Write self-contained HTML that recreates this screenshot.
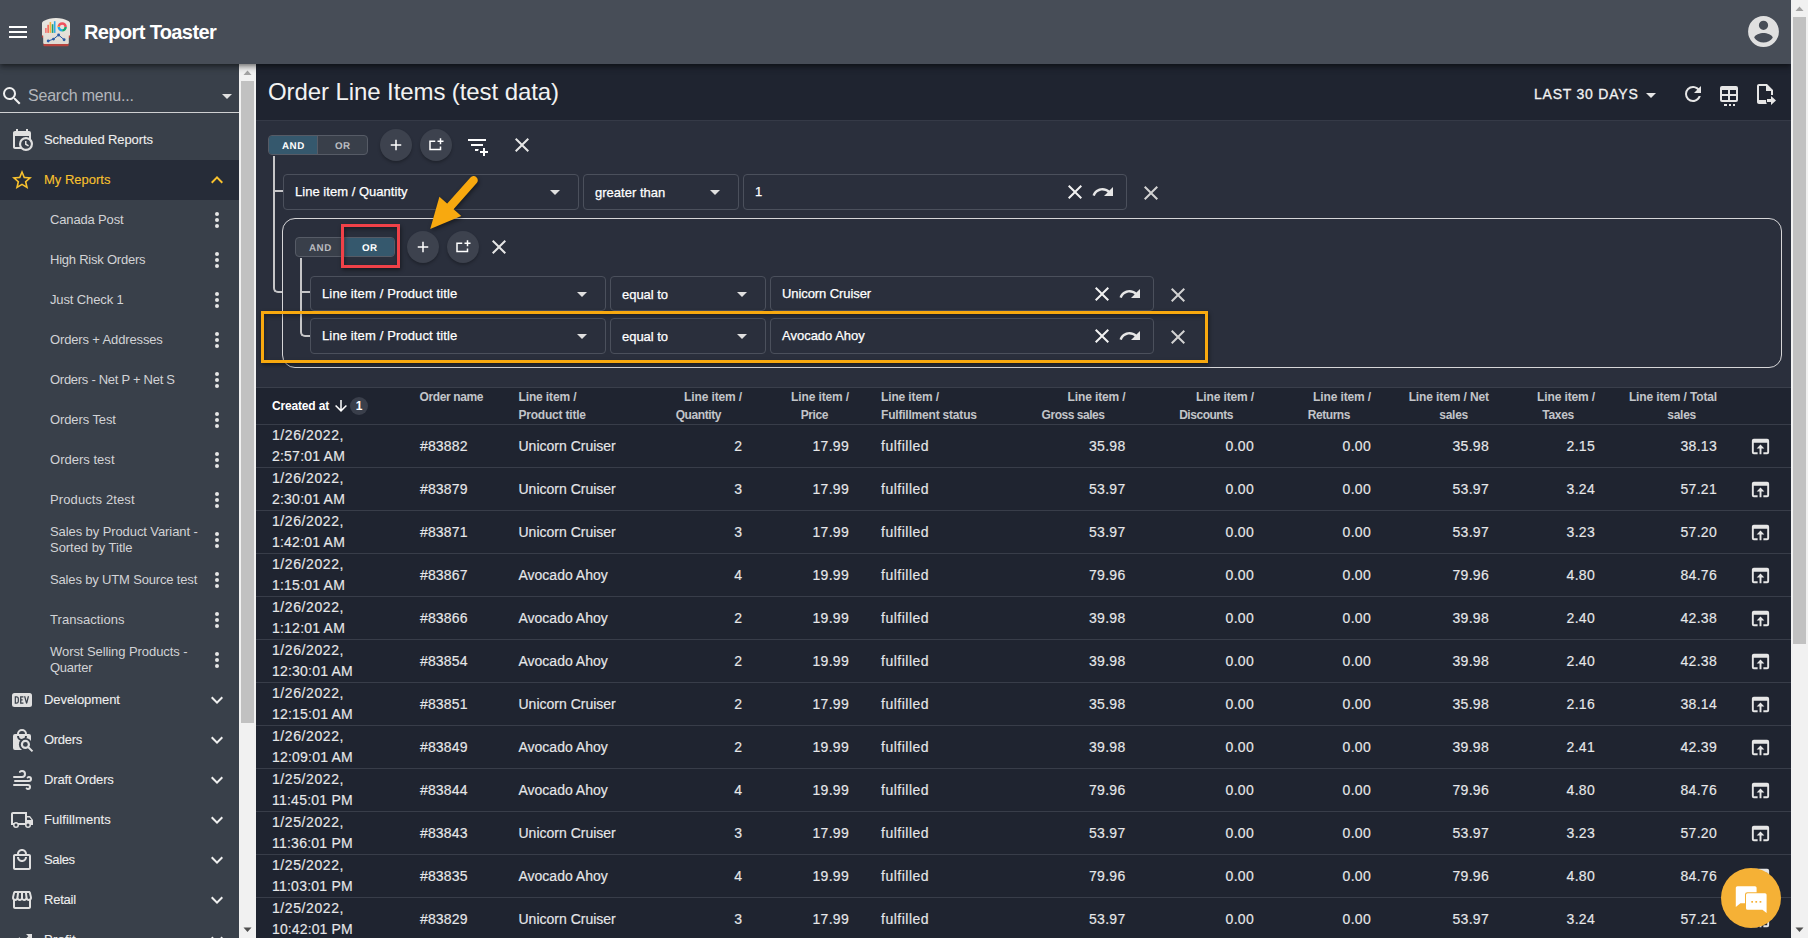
<!DOCTYPE html>
<html><head><meta charset="utf-8"><title>Report Toaster</title>
<style>
*{box-sizing:border-box}
html,body{margin:0;padding:0}
body{width:1808px;height:938px;overflow:hidden;position:relative;background:#1f2430;
 font-family:"Liberation Sans",sans-serif;color:#e6e6e6;font-size:14px}
.abs,.ic,.t{position:absolute}
.ic{display:block;overflow:visible}
.t{white-space:nowrap;line-height:20px}
#topbar{position:absolute;left:0;top:0;width:1791px;height:64px;background:#474d57;
 box-shadow:0 2px 4px -1px rgba(0,0,0,.35),0 4px 5px 0 rgba(0,0,0,.2),0 1px 10px 0 rgba(0,0,0,.15);z-index:5}
#side{position:absolute;left:0;top:64px;width:239px;height:874px;background:#39404a;overflow:hidden}
#sidesb{position:absolute;left:239px;top:64px;width:17px;height:874px;background:#f1f1f1}
#pagesb{position:absolute;left:1791px;top:0;width:17px;height:938px;background:#f1f1f1;z-index:6}
.thumb{position:absolute;background:#c1c1c1}
.m13{font-size:13px;-webkit-text-stroke:.1px currentColor}
.sub{font-size:13px;color:#d2d3d6}
#titlebar{position:absolute;left:256px;top:64px;width:1535px;height:56px;background:#1f2430}
#filters{position:absolute;left:256px;top:120px;width:1535px;height:268px;background:#2a2f3c;
 border-top:1px solid #353a47;border-bottom:1px solid #3a3f4b}
.box{position:absolute;height:35px;border:1px solid #4b505c;border-radius:4px}
.box .t{top:7px;font-size:13px;color:#fff;-webkit-text-stroke:.25px #fff}
.tog{position:absolute;width:100px;height:20px;border-radius:4px;background:#393f4a;border:1px solid #565b66;overflow:hidden}
.tog span{position:absolute;top:0;height:18px;line-height:20.4px;text-align:center;font-size:9.8px;font-weight:bold;letter-spacing:.5px;color:#b9bbc0}
.tog span.on{background:#35586d;color:#fff}
.tog i{display:inline-block;font-style:normal;transform:rotate(.03deg)}
.fab{position:absolute;width:32px;height:32px;border-radius:50%;background:#3d424e;
 box-shadow:0 2px 3px rgba(0,0,0,.25)}
.line{position:absolute;background:#c6c6c8}
#tbl{position:absolute;left:256px;top:388px;width:1535px;height:550px;background:#1f2430;overflow:hidden}
.row{position:absolute;left:0;width:1535px;height:43px;border-bottom:1px solid #383d49}
.row .t{font-size:14px;color:#e6e7e9;-webkit-text-stroke:.15px #e6e7e9}
.th{position:absolute;font-size:12px;font-weight:bold;color:#c3c5c9;line-height:18px;white-space:nowrap}
.r{text-align:right}
</style></head><body>

<div id="topbar">
<svg class="ic" style="left:6px;top:20px;width:24px;height:24px;" viewBox="0 0 24 24"><path fill="#fff" d="M3,6H21V8H3V6M3,11H21V13H3V11M3,16H21V18H3V16Z"/></svg>
<svg class="ic" style="left:40px;top:16px;width:32px;height:32px" viewBox="0 0 32 32">
<defs><linearGradient id="lg" x1="0" y1="0" x2="0" y2="1"><stop offset="0" stop-color="#ebe8e2"/><stop offset="1" stop-color="#dfdbd3"/></linearGradient></defs>
<path d="M3.4,27.6 H28.6 V29.2 Q28.6,30.2 27.4,30.2 H4.6 Q3.4,30.2 3.4,29.2Z" fill="#b8443e"/>
<rect x="1.8" y="19" width="28.4" height="2.8" rx="1" fill="#b8443e"/>
<path d="M2,7.2 Q2,5.6 3.6,4.9 Q9,1.9 16,1.9 Q23,1.9 28.4,4.9 Q30,5.6 30,7.2 V19.6 H28.8 V27 Q28.8,28 27.6,28 H4.4 Q3.2,28 3.2,27 V19.6 H2Z" fill="url(#lg)"/>
<rect x="5" y="12" width="1.7" height="4.9" fill="#f07a7a"/>
<rect x="7.3" y="8.8" width="1.7" height="8.1" fill="#f4705e"/>
<rect x="9.6" y="6" width="1.6" height="10.9" fill="#f8b23e"/>
<rect x="11.8" y="8.2" width="1.6" height="8.7" fill="#22a06c"/>
<rect x="13.9" y="5.2" width="1.6" height="11.7" fill="#2fa8ea"/>
<g fill="none" stroke-width="2.4">
<path d="M18.75,10.9 A3.45,3.45 0 0 1 25.65,10.9" stroke="#f0525e"/>
<path d="M25.65,10.9 A3.45,3.45 0 0 1 22.2,14.35" stroke="#12a870"/>
<path d="M22.2,14.35 A3.45,3.45 0 0 1 18.75,10.9" stroke="#22a8ea"/>
<path d="M18.75,10.9 A3.45,3.45 0 0 1 18.85,10.1" stroke="#f8b23e"/>
</g>
<path d="M8.2,25 L13.5,23.1 L18.6,19 L24.1,23.7" fill="none" stroke="#2a5aa4" stroke-width="1"/>
<g fill="#2a5aa4"><circle cx="8.2" cy="25" r="1.45"/><circle cx="13.5" cy="23.1" r="1.45"/><circle cx="18.6" cy="19" r="1.45"/><circle cx="24.1" cy="23.7" r="1.45"/></g>
</svg>
<div class="t" style="left:84px;top:20px;line-height:24px;font-size:20px;font-weight:bold;color:#fff;letter-spacing:-.62px">Report Toaster</div>
<svg class="ic" style="left:1744.5px;top:13.1px;width:37px;height:37px;" viewBox="0 0 24 24"><path fill="#e0e0e0" d="M12,19.2C9.5,19.2 7.29,17.92 6,16C6.03,14 10,12.9 12,12.9C14,12.9 17.97,14 18,16C16.71,17.92 14.5,19.2 12,19.2M12,5A3,3 0 0,1 15,8A3,3 0 0,1 12,11A3,3 0 0,1 9,8A3,3 0 0,1 12,5M12,2A10,10 0 0,0 2,12A10,10 0 0,0 12,22A10,10 0 0,0 22,12C22,6.47 17.5,2 12,2Z"/></svg>
</div>
<div id="side">
<svg class="ic" style="left:0px;top:20px;width:24px;height:24px;" viewBox="0 0 24 24"><path fill="#f0f0f0" d="M9.5,3A6.5,6.5 0 0,1 16,9.5C16,11.11 15.41,12.59 14.44,13.73L14.71,14H15.5L20.5,19L19,20.5L14,15.5V14.71L13.73,14.44C12.59,15.41 11.11,16 9.5,16A6.5,6.5 0 0,1 3,9.5A6.5,6.5 0 0,1 9.5,3M9.5,5C7,5 5,7 5,9.5C5,12 7,14 9.5,14C12,14 14,12 14,9.5C14,7 12,5 9.5,5Z"/></svg>
<div class="t" style="left:28px;top:21px;line-height:22px;font-size:16px;color:#b3b6bb;letter-spacing:-.2px">Search menu...</div>
<svg class="ic" style="left:215px;top:20px;width:24px;height:24px;" viewBox="0 0 24 24"><path fill="#e0e0e0" d="M7,10L12,15L17,10H7Z"/></svg>
<div class="abs" style="left:0;top:48px;width:239px;height:1px;background:#cfd0d2"></div>
<svg class="ic" style="left:10px;top:64px;width:24px;height:24px;" viewBox="0 0 24 24"><path fill="#e0e0e0" d="M15,13H16.5V15.82L18.94,17.23L18.19,18.53L15,16.69V13M19,8H5V19H9.67C9.24,18.09 9,17.07 9,16A7,7 0 0,1 16,9C17.07,9 18.09,9.24 19,9.67V8M5,21C3.89,21 3,20.1 3,19V5C3,3.89 3.89,3 5,3H6V1H8V3H16V1H18V3H19A2,2 0 0,1 21,5V11.1C22.24,12.36 23,14.09 23,16A7,7 0 0,1 16,23C14.09,23 12.36,22.24 11.1,21H5M16,11.15A4.85,4.85 0 0,0 11.15,16C11.15,18.68 13.32,20.85 16,20.85A4.85,4.85 0 0,0 20.85,16C20.85,13.32 18.68,11.15 16,11.15Z"/></svg>
<div class="t m13" style="left:44px;top:65.5px;color:#eee;letter-spacing:-0.10px">Scheduled Reports</div>
<div class="abs" style="left:0;top:96px;width:239px;height:40px;background:#262c38"></div>
<svg class="ic" style="left:10px;top:104px;width:24px;height:24px;" viewBox="0 0 24 24"><path fill="#f9c22e" d="M12,15.39L8.24,17.66L9.23,13.38L5.91,10.5L10.29,10.13L12,6.09L13.71,10.13L18.09,10.5L14.77,13.38L15.76,17.66M22,9.24L14.81,8.63L12,2L9.19,8.63L2,9.24L7.45,13.97L5.82,21L12,17.27L18.18,21L16.54,13.97L22,9.24Z"/></svg>
<div class="t m13" style="left:44px;top:105.5px;color:#f9c22e">My Reports</div>
<svg class="ic" style="left:205px;top:104px;width:24px;height:24px;" viewBox="0 0 24 24"><path fill="#f9c22e" d="M7.41,15.41L12,10.83L16.59,15.41L18,14L12,8L6,14L7.41,15.41Z"/></svg>
<div class="t sub" style="left:50px;top:145.5px"><span style="letter-spacing:-0.15px">Canada Post</span></div>
<svg class="ic" style="left:205px;top:144px;width:24px;height:24px;" viewBox="0 0 24 24"><path fill="#e6e6e6" d="M12,16A2,2 0 0,1 14,18A2,2 0 0,1 12,20A2,2 0 0,1 10,18A2,2 0 0,1 12,16M12,10A2,2 0 0,1 14,12A2,2 0 0,1 12,14A2,2 0 0,1 10,12A2,2 0 0,1 12,10M12,4A2,2 0 0,1 14,6A2,2 0 0,1 12,8A2,2 0 0,1 10,6A2,2 0 0,1 12,4Z"/></svg>
<div class="t sub" style="left:50px;top:185.5px"><span style="letter-spacing:-0.23px">High Risk Orders</span></div>
<svg class="ic" style="left:205px;top:184px;width:24px;height:24px;" viewBox="0 0 24 24"><path fill="#e6e6e6" d="M12,16A2,2 0 0,1 14,18A2,2 0 0,1 12,20A2,2 0 0,1 10,18A2,2 0 0,1 12,16M12,10A2,2 0 0,1 14,12A2,2 0 0,1 12,14A2,2 0 0,1 10,12A2,2 0 0,1 12,10M12,4A2,2 0 0,1 14,6A2,2 0 0,1 12,8A2,2 0 0,1 10,6A2,2 0 0,1 12,4Z"/></svg>
<div class="t sub" style="left:50px;top:225.5px"><span style="letter-spacing:-0.13px">Just Check 1</span></div>
<svg class="ic" style="left:205px;top:224px;width:24px;height:24px;" viewBox="0 0 24 24"><path fill="#e6e6e6" d="M12,16A2,2 0 0,1 14,18A2,2 0 0,1 12,20A2,2 0 0,1 10,18A2,2 0 0,1 12,16M12,10A2,2 0 0,1 14,12A2,2 0 0,1 12,14A2,2 0 0,1 10,12A2,2 0 0,1 12,10M12,4A2,2 0 0,1 14,6A2,2 0 0,1 12,8A2,2 0 0,1 10,6A2,2 0 0,1 12,4Z"/></svg>
<div class="t sub" style="left:50px;top:265.5px"><span style="letter-spacing:-0.14px">Orders + Addresses</span></div>
<svg class="ic" style="left:205px;top:264px;width:24px;height:24px;" viewBox="0 0 24 24"><path fill="#e6e6e6" d="M12,16A2,2 0 0,1 14,18A2,2 0 0,1 12,20A2,2 0 0,1 10,18A2,2 0 0,1 12,16M12,10A2,2 0 0,1 14,12A2,2 0 0,1 12,14A2,2 0 0,1 10,12A2,2 0 0,1 12,10M12,4A2,2 0 0,1 14,6A2,2 0 0,1 12,8A2,2 0 0,1 10,6A2,2 0 0,1 12,4Z"/></svg>
<div class="t sub" style="left:50px;top:305.5px"><span style="letter-spacing:-0.28px">Orders - Net P + Net S</span></div>
<svg class="ic" style="left:205px;top:304px;width:24px;height:24px;" viewBox="0 0 24 24"><path fill="#e6e6e6" d="M12,16A2,2 0 0,1 14,18A2,2 0 0,1 12,20A2,2 0 0,1 10,18A2,2 0 0,1 12,16M12,10A2,2 0 0,1 14,12A2,2 0 0,1 12,14A2,2 0 0,1 10,12A2,2 0 0,1 12,10M12,4A2,2 0 0,1 14,6A2,2 0 0,1 12,8A2,2 0 0,1 10,6A2,2 0 0,1 12,4Z"/></svg>
<div class="t sub" style="left:50px;top:345.5px"><span style="letter-spacing:-0.10px">Orders Test</span></div>
<svg class="ic" style="left:205px;top:344px;width:24px;height:24px;" viewBox="0 0 24 24"><path fill="#e6e6e6" d="M12,16A2,2 0 0,1 14,18A2,2 0 0,1 12,20A2,2 0 0,1 10,18A2,2 0 0,1 12,16M12,10A2,2 0 0,1 14,12A2,2 0 0,1 12,14A2,2 0 0,1 10,12A2,2 0 0,1 12,10M12,4A2,2 0 0,1 14,6A2,2 0 0,1 12,8A2,2 0 0,1 10,6A2,2 0 0,1 12,4Z"/></svg>
<div class="t sub" style="left:50px;top:385.5px"><span style="letter-spacing:0.02px">Orders test</span></div>
<svg class="ic" style="left:205px;top:384px;width:24px;height:24px;" viewBox="0 0 24 24"><path fill="#e6e6e6" d="M12,16A2,2 0 0,1 14,18A2,2 0 0,1 12,20A2,2 0 0,1 10,18A2,2 0 0,1 12,16M12,10A2,2 0 0,1 14,12A2,2 0 0,1 12,14A2,2 0 0,1 10,12A2,2 0 0,1 12,10M12,4A2,2 0 0,1 14,6A2,2 0 0,1 12,8A2,2 0 0,1 10,6A2,2 0 0,1 12,4Z"/></svg>
<div class="t sub" style="left:50px;top:425.5px"><span style="letter-spacing:0.11px">Products 2test</span></div>
<svg class="ic" style="left:205px;top:424px;width:24px;height:24px;" viewBox="0 0 24 24"><path fill="#e6e6e6" d="M12,16A2,2 0 0,1 14,18A2,2 0 0,1 12,20A2,2 0 0,1 10,18A2,2 0 0,1 12,16M12,10A2,2 0 0,1 14,12A2,2 0 0,1 12,14A2,2 0 0,1 10,12A2,2 0 0,1 12,10M12,4A2,2 0 0,1 14,6A2,2 0 0,1 12,8A2,2 0 0,1 10,6A2,2 0 0,1 12,4Z"/></svg>
<div class="t sub" style="left:50px;top:460px;line-height:16px"><span style="letter-spacing:-0.09px">Sales by Product Variant -</span><br><span style="letter-spacing:-0.04px">Sorted by Title</span></div>
<svg class="ic" style="left:205px;top:464px;width:24px;height:24px;" viewBox="0 0 24 24"><path fill="#e6e6e6" d="M12,16A2,2 0 0,1 14,18A2,2 0 0,1 12,20A2,2 0 0,1 10,18A2,2 0 0,1 12,16M12,10A2,2 0 0,1 14,12A2,2 0 0,1 12,14A2,2 0 0,1 10,12A2,2 0 0,1 12,10M12,4A2,2 0 0,1 14,6A2,2 0 0,1 12,8A2,2 0 0,1 10,6A2,2 0 0,1 12,4Z"/></svg>
<div class="t sub" style="left:50px;top:505.5px"><span style="letter-spacing:-0.16px">Sales by UTM Source test</span></div>
<svg class="ic" style="left:205px;top:504px;width:24px;height:24px;" viewBox="0 0 24 24"><path fill="#e6e6e6" d="M12,16A2,2 0 0,1 14,18A2,2 0 0,1 12,20A2,2 0 0,1 10,18A2,2 0 0,1 12,16M12,10A2,2 0 0,1 14,12A2,2 0 0,1 12,14A2,2 0 0,1 10,12A2,2 0 0,1 12,10M12,4A2,2 0 0,1 14,6A2,2 0 0,1 12,8A2,2 0 0,1 10,6A2,2 0 0,1 12,4Z"/></svg>
<div class="t sub" style="left:50px;top:545.5px"><span style="letter-spacing:0.05px">Transactions</span></div>
<svg class="ic" style="left:205px;top:544px;width:24px;height:24px;" viewBox="0 0 24 24"><path fill="#e6e6e6" d="M12,16A2,2 0 0,1 14,18A2,2 0 0,1 12,20A2,2 0 0,1 10,18A2,2 0 0,1 12,16M12,10A2,2 0 0,1 14,12A2,2 0 0,1 12,14A2,2 0 0,1 10,12A2,2 0 0,1 12,10M12,4A2,2 0 0,1 14,6A2,2 0 0,1 12,8A2,2 0 0,1 10,6A2,2 0 0,1 12,4Z"/></svg>
<div class="t sub" style="left:50px;top:580px;line-height:16px"><span style="letter-spacing:-0.07px">Worst Selling Products -</span><br><span style="letter-spacing:-0.26px">Quarter</span></div>
<svg class="ic" style="left:205px;top:584px;width:24px;height:24px;" viewBox="0 0 24 24"><path fill="#e6e6e6" d="M12,16A2,2 0 0,1 14,18A2,2 0 0,1 12,20A2,2 0 0,1 10,18A2,2 0 0,1 12,16M12,10A2,2 0 0,1 14,12A2,2 0 0,1 12,14A2,2 0 0,1 10,12A2,2 0 0,1 12,10M12,4A2,2 0 0,1 14,6A2,2 0 0,1 12,8A2,2 0 0,1 10,6A2,2 0 0,1 12,4Z"/></svg>
<div class="t m13" style="left:44px;top:625.5px;color:#eee;letter-spacing:-0.07px">Development</div>
<svg class="ic" style="left:205px;top:624px;width:24px;height:24px;" viewBox="0 0 24 24"><path fill="#f0f0f0" d="M7.41,8.58L12,13.17L16.59,8.58L18,10L12,16L6,10L7.41,8.58Z"/></svg>
<div class="t m13" style="left:44px;top:665.5px;color:#eee;letter-spacing:-0.31px">Orders</div>
<svg class="ic" style="left:205px;top:664px;width:24px;height:24px;" viewBox="0 0 24 24"><path fill="#f0f0f0" d="M7.41,8.58L12,13.17L16.59,8.58L18,10L12,16L6,10L7.41,8.58Z"/></svg>
<svg class="ic" style="left:10px;top:704px;width:24px;height:24px;" viewBox="0 0 24 24"><path fill="#e0e0e0" d="M4,10A1,1 0 0,1 3,9A1,1 0 0,1 4,8H12A2,2 0 0,0 14,6A2,2 0 0,0 12,4C11.45,4 10.95,4.22 10.59,4.59C10.2,5 9.56,5 9.17,4.59C8.78,4.2 8.78,3.56 9.17,3.17C9.9,2.45 10.9,2 12,2A4,4 0 0,1 16,6A4,4 0 0,1 12,10H4M19,12A1,1 0 0,0 20,11A1,1 0 0,0 19,10C18.72,10 18.47,10.11 18.29,10.29C17.9,10.68 17.27,10.68 16.88,10.29C16.5,9.9 16.5,9.27 16.88,8.88C17.42,8.34 18.17,8 19,8A3,3 0 0,1 22,11A3,3 0 0,1 19,14H5A1,1 0 0,1 4,13A1,1 0 0,1 5,12H19M18,18H4A1,1 0 0,1 3,17A1,1 0 0,1 4,16H18A3,3 0 0,1 21,19A3,3 0 0,1 18,22C17.17,22 16.42,21.66 15.88,21.12C15.5,20.73 15.5,20.1 15.88,19.71C16.27,19.32 16.9,19.32 17.29,19.71C17.47,19.89 17.72,20 18,20A1,1 0 0,0 19,19A1,1 0 0,0 18,18Z"/></svg>
<div class="t m13" style="left:44px;top:705.5px;color:#eee;letter-spacing:-0.15px">Draft Orders</div>
<svg class="ic" style="left:205px;top:704px;width:24px;height:24px;" viewBox="0 0 24 24"><path fill="#f0f0f0" d="M7.41,8.58L12,13.17L16.59,8.58L18,10L12,16L6,10L7.41,8.58Z"/></svg>
<svg class="ic" style="left:10px;top:744px;width:24px;height:24px;" viewBox="0 0 24 24"><path fill="#e0e0e0" d="M18,18.5A1.5,1.5 0 0,0 19.5,17A1.5,1.5 0 0,0 18,15.5A1.5,1.5 0 0,0 16.5,17A1.5,1.5 0 0,0 18,18.5M19.5,9.5H17V12H21.46L19.5,9.5M6,18.5A1.5,1.5 0 0,0 7.5,17A1.5,1.5 0 0,0 6,15.5A1.5,1.5 0 0,0 4.5,17A1.5,1.5 0 0,0 6,18.5M20,8L23,12V17H21A3,3 0 0,1 18,20A3,3 0 0,1 15,17H9A3,3 0 0,1 6,20A3,3 0 0,1 3,17H1V6C1,4.89 1.89,4 3,4H17V8H20M3,6V15H3.76C4.31,14.39 5.11,14 6,14C6.89,14 7.69,14.39 8.24,15H15V6H3Z"/></svg>
<div class="t m13" style="left:44px;top:745.5px;color:#eee;letter-spacing:0.10px">Fulfillments</div>
<svg class="ic" style="left:205px;top:744px;width:24px;height:24px;" viewBox="0 0 24 24"><path fill="#f0f0f0" d="M7.41,8.58L12,13.17L16.59,8.58L18,10L12,16L6,10L7.41,8.58Z"/></svg>
<svg class="ic" style="left:10px;top:784px;width:24px;height:24px;" viewBox="0 0 24 24"><path fill="#e0e0e0" d="M19 6H17C17 3.2 14.8 1 12 1S7 3.2 7 6H5C3.9 6 3 6.9 3 8V20C3 21.1 3.9 22 5 22H19C20.1 22 21 21.1 21 20V8C21 6.9 20.1 6 19 6M12 3C13.7 3 15 4.3 15 6H9C9 4.3 10.3 3 12 3M19 20H5V8H19V20M12 12C10.3 12 9 10.7 9 9H7C7 11.8 9.2 14 12 14S17 11.8 17 9H15C15 10.7 13.7 12 12 12Z"/></svg>
<div class="t m13" style="left:44px;top:785.5px;color:#eee;letter-spacing:-0.36px">Sales</div>
<svg class="ic" style="left:205px;top:784px;width:24px;height:24px;" viewBox="0 0 24 24"><path fill="#f0f0f0" d="M7.41,8.58L12,13.17L16.59,8.58L18,10L12,16L6,10L7.41,8.58Z"/></svg>
<svg class="ic" style="left:10px;top:824px;width:24px;height:24px;" viewBox="0 0 24 24"><path fill="#e0e0e0" d="M21.9 8.89L20.85 4.52C20.63 3.62 19.85 3 18.94 3H5.05C4.15 3 3.36 3.63 3.15 4.52L2.1 8.89C1.86 9.91 2.08 10.95 2.72 11.77C2.8 11.88 2.91 11.96 3 12.06V19C3 20.1 3.9 21 5 21H19C20.1 21 21 20.1 21 19V12.06C21.09 11.97 21.2 11.88 21.28 11.78C21.92 10.96 22.15 9.91 21.9 8.89M18.91 4.99L19.96 9.36C20.06 9.78 19.97 10.2 19.71 10.53C19.57 10.71 19.27 11 18.77 11C18.16 11 17.63 10.51 17.56 9.86L16.98 5L18.91 4.99M13 5H14.96L15.5 9.52C15.55 9.91 15.43 10.3 15.17 10.59C14.95 10.85 14.63 11 14.22 11C13.55 11 13 10.41 13 9.69V5M8.49 9.52L9.04 5H11V9.69C11 10.41 10.45 11 9.71 11C9.37 11 9.06 10.85 8.82 10.59C8.57 10.3 8.45 9.91 8.49 9.52M4.04 9.36L5.05 5H7.02L6.44 9.86C6.36 10.51 5.84 11 5.23 11C4.74 11 4.43 10.71 4.3 10.53C4.03 10.21 3.94 9.78 4.04 9.36M5 19V12.97C5.08 12.98 5.15 13 5.23 13C6.1 13 6.89 12.64 7.47 12.05C8.07 12.65 8.87 13 9.78 13C10.65 13 11.43 12.64 12 12.07C12.59 12.64 13.39 13 14.29 13C15.13 13 15.93 12.65 16.53 12.05C17.11 12.64 17.9 13 18.77 13C18.85 13 18.92 12.98 19 12.97V19H5Z"/></svg>
<div class="t m13" style="left:44px;top:825.5px;color:#eee;letter-spacing:-0.21px">Retail</div>
<svg class="ic" style="left:205px;top:824px;width:24px;height:24px;" viewBox="0 0 24 24"><path fill="#f0f0f0" d="M7.41,8.58L12,13.17L16.59,8.58L18,10L12,16L6,10L7.41,8.58Z"/></svg>
<svg class="ic" style="left:10px;top:864px;width:24px;height:24px;" viewBox="0 0 24 24"><path fill="#e0e0e0" d="M16,6L18.29,8.29L13.41,13.17L9.41,9.17L2,16.59L3.41,18L9.41,12L13.41,16L19.71,9.71L22,12V6H16Z"/></svg>
<div class="t m13" style="left:44px;top:865.5px;color:#eee;letter-spacing:0.23px">Profit</div>
<svg class="ic" style="left:205px;top:864px;width:24px;height:24px;" viewBox="0 0 24 24"><path fill="#f0f0f0" d="M7.41,8.58L12,13.17L16.59,8.58L18,10L12,16L6,10L7.41,8.58Z"/></svg>
<svg class="ic" style="left:10px;top:624px;width:24px;height:24px" viewBox="0 0 24 24"><rect x="2" y="5" width="20" height="14" rx="2.5" fill="#e0e0e0"/>
<path fill="#39404a" fill-rule="evenodd" d="M4.72,8.35H6.4Q8.93,8.35 8.93,10.9V13.1Q8.93,15.64 6.4,15.64H4.72Z M5.91,9.58V14.4H6.5Q7.73,14.4 7.73,13.2V10.8Q7.73,9.58 6.5,9.58Z M10.09,8.35H13.43V9.6H11.38V11.36H12.64V12.6H11.38V14.4H13.43V15.64H10.09Z M14,8.35H15.34L16.54,13.06L17.77,8.35H19.08L17.35,15.04Q17.1,15.65 16.6,15.65Q16.05,15.65 15.86,15.04Z"/></svg>
<svg class="ic" style="left:10px;top:664px;width:24px;height:24px" viewBox="0 0 24 24">
<path fill="#e0e0e0" d="M5,6H7A5,5 0 0,1 17,6H19A2,2 0 0,1 21,8V20A2,2 0 0,1 19,22H5A2,2 0 0,1 3,20V8A2,2 0 0,1 5,6Z"/>
<path fill="#39404a" d="M9,6H15A3,3 0 0,0 9,6Z M7,8A5,5 0 0,0 17,8H15A3,3 0 0,1 9,8Z"/>
<circle cx="15.4" cy="16.4" r="6.5" fill="#39404a"/><rect x="12" y="16" width="10" height="7" fill="#39404a"/>
<path fill="#e0e0e0" fill-rule="evenodd" d="M15.4,11.8A4.6,4.6 0 0,1 20,16.4C20,17.3 19.75,18.1 19.3,18.8L23.2,22.7L21.8,24.1L17.9,20.2C17.2,20.7 16.3,21 15.4,21A4.6,4.6 0 0,1 10.8,16.4A4.6,4.6 0 0,1 15.4,11.8M15.4,14A2.4,2.4 0 0,0 13,16.4A2.4,2.4 0 0,0 15.4,18.8A2.4,2.4 0 0,0 17.8,16.4A2.4,2.4 0 0,0 15.4,14Z"/></svg>
</div>
<div id="sidesb"><div class="thumb" style="left:2px;top:17px;width:13px;height:642px"></div><svg class="ic" style="left:0;top:0;width:17px;height:17px" viewBox="0 0 17 17"><path d="M4.5,11 L8.5,6.5 L12.5,11Z" fill="#a3a3a3"/></svg><svg class="ic" style="left:0;top:857px;width:17px;height:17px" viewBox="0 0 17 17"><path d="M4.5,6.5 L8.5,11 L12.5,6.5Z" fill="#505050"/></svg></div>
<div id="pagesb"><div class="thumb" style="left:2px;top:17px;width:13px;height:627px"></div><svg class="ic" style="left:0;top:0;width:17px;height:17px" viewBox="0 0 17 17"><path d="M4.5,11 L8.5,6.5 L12.5,11Z" fill="#a3a3a3"/></svg><svg class="ic" style="left:0;top:921px;width:17px;height:17px" viewBox="0 0 17 17"><path d="M4.5,6.5 L8.5,11 L12.5,6.5Z" fill="#505050"/></svg></div>
<div id="titlebar">
<div class="t" style="left:12px;top:12px;line-height:32px;font-size:24px;color:#f2f2f2;letter-spacing:-.09px">Order Line Items (test data)</div>
<div class="t" style="left:1278px;top:20px;font-size:14px;color:#f2f2f2;letter-spacing:.78px;-webkit-text-stroke:.3px #f2f2f2">LAST 30 DAYS</div>
<svg class="ic" style="left:1383px;top:18.5px;width:24px;height:24px;" viewBox="0 0 24 24"><path fill="#e6e6e6" d="M7,10L12,15L17,10H7Z"/></svg>
<svg class="ic" style="left:1425px;top:18px;width:24px;height:24px;" viewBox="0 0 24 24"><path fill="#e6e6e6" d="M17.65,6.35C16.2,4.9 14.21,4 12,4A8,8 0 0,0 4,12A8,8 0 0,0 12,20C15.73,20 18.84,17.45 19.73,14H17.65C16.83,16.33 14.61,18 12,18A6,6 0 0,1 6,12A6,6 0 0,1 12,6C13.66,6 15.14,6.69 16.22,7.78L13,11H20V4L17.65,6.35Z"/></svg>
<svg class="ic" style="left:1461px;top:18px;width:24px;height:24px;" viewBox="0 0 24 24"><path fill="#e6e6e6" d="M5,4H19A2,2 0 0,1 21,6V18A2,2 0 0,1 19,20H5A2,2 0 0,1 3,18V6A2,2 0 0,1 5,4M5,8V12H11V8H5M13,8V12H19V8H13M5,14V18H11V14H5M13,14V18H19V14H13Z"/></svg>
<div class="abs" style="left:1467.5px;top:40px;width:11.5px;height:2px;background:repeating-linear-gradient(90deg,#e6e6e6 0 2.5px,transparent 2.5px 4.5px)"></div>
<svg class="ic" style="left:1497px;top:18px;width:24px;height:24px;" viewBox="0 0 24 24"><path fill="#e6e6e6" d="M14,2H6C4.89,2 4,2.89 4,4V20C4,21.11 4.89,22 6,22H13.81C13.28,21.09 13,20.05 13,19C13,18.67 13.03,18.33 13.08,18H6V4H13V9H18V13.08C18.33,13.03 18.67,13 19,13C19.34,13 19.67,13.03 20,13.08V8L14,2M18,23L23,18.5L20,15.8L18,14V17H14V20H18V23Z"/></svg>
</div>
<div id="filters">
<div class="tog" style="left:12px;top:14px"><span class="on" style="left:0;width:49px;border-right:1px solid #565b66"><i>AND</i></span><span style="left:49px;width:49px"><i>OR</i></span></div>
<div class="fab" style="left:124px;top:8px"></div><svg class="ic" style="left:131px;top:15px;width:18px;height:18px;" viewBox="0 0 24 24"><path fill="#fff" d="M19,13H13V19H11V13H5V11H11V5H13V11H19V13Z"/></svg>
<div class="fab" style="left:164px;top:8px"></div><svg class="ic" style="left:171px;top:15px;width:18px;height:18px;" viewBox="0 0 24 24"><path fill="#fff" d="M19,6H22V8H19V11H17V8H14V6H17V3H19V6M17,17V14H19V19H3V6H11V8H5V17H17Z"/></svg>
<svg class="ic" style="left:209px;top:12px;width:24px;height:24px;" viewBox="0 0 24 24"><path fill="#fff" d="M21 8H3V6H21V8M13.81 16H10V18H13.09C13.21 17.28 13.46 16.61 13.81 16M18 11H6V13H18V11M18 15V18H15V20H18V23H20V20H23V18H20V15H18Z"/></svg>
<svg class="ic" style="left:254px;top:12px;width:24px;height:24px;" viewBox="0 0 24 24"><path fill="#e6e6e6" d="M19,6.41L17.59,5L12,10.59L6.41,5L5,6.41L10.59,12L5,17.59L6.41,19L12,13.41L17.59,19L19,17.59L13.41,12L19,6.41Z"/></svg>
<div class="abs" style="left:17px;top:35px;width:10px;height:137px;border-left:2px solid #c6c6c8;border-bottom:2px solid #c6c6c8;border-bottom-left-radius:5px"></div>
<div class="line" style="left:19px;top:69px;width:8px;height:2px"></div>
<div class="box" style="left:27px;top:53px;width:296px;height:36px"><div class="t" style="left:11px;top:7px;letter-spacing:0.03px">Line item / Quantity</div></div><svg class="ic" style="left:287px;top:59.2px;width:24px;height:24px;" viewBox="0 0 24 24"><path fill="#e0e0e0" d="M7,10L12,15L17,10H7Z"/></svg><div class="box" style="left:327px;top:53px;width:156px;height:36px"><div class="t" style="left:11px;top:8px;letter-spacing:0.02px">greater than</div></div><svg class="ic" style="left:447px;top:59.2px;width:24px;height:24px;" viewBox="0 0 24 24"><path fill="#e0e0e0" d="M7,10L12,15L17,10H7Z"/></svg><div class="box" style="left:487px;top:53px;width:384px;height:36px"><div class="t" style="left:11px;top:7px">1</div></div><svg class="ic" style="left:807px;top:59px;width:24px;height:24px;" viewBox="0 0 24 24"><path fill="#f2f2f2" d="M19,6.41L17.59,5L12,10.59L6.41,5L5,6.41L10.59,12L5,17.59L6.41,19L12,13.41L17.59,19L19,17.59L13.41,12L19,6.41Z"/></svg><svg class="ic" style="left:835px;top:59px;width:24px;height:24px;" viewBox="0 0 24 24"><path fill="#e6e6e6" d="M18.4,10.6C16.55,9 14.15,8 11.5,8C6.85,8 2.92,11.03 1.54,15.22L3.9,16C4.95,12.81 7.95,10.5 11.5,10.5C13.45,10.5 15.23,11.22 16.62,12.38L13,16H22V7L18.4,10.6Z"/></svg><svg class="ic" style="left:883px;top:60px;width:24px;height:24px;" viewBox="0 0 24 24"><path fill="#d2d2d2" d="M19,6.41L17.59,5L12,10.59L6.41,5L5,6.41L10.59,12L5,17.59L6.41,19L12,13.41L17.59,19L19,17.59L13.41,12L19,6.41Z"/></svg>
<div class="abs" style="left:26px;top:97px;width:1500px;height:150px;border:1px solid #d6d6d8;border-radius:13px;background:#2a2f3c"></div>
<div class="tog" style="left:39px;top:116px"><span style="left:0;width:49px;border-right:1px solid #565b66"><i>AND</i></span><span class="on" style="left:49px;width:49px"><i>OR</i></span></div>
<div class="fab" style="left:151px;top:110px"></div><svg class="ic" style="left:158px;top:117px;width:18px;height:18px;" viewBox="0 0 24 24"><path fill="#fff" d="M19,13H13V19H11V13H5V11H11V5H13V11H19V13Z"/></svg>
<div class="fab" style="left:191px;top:110px"></div><svg class="ic" style="left:198px;top:117px;width:18px;height:18px;" viewBox="0 0 24 24"><path fill="#fff" d="M19,6H22V8H19V11H17V8H14V6H17V3H19V6M17,17V14H19V19H3V6H11V8H5V17H17Z"/></svg>
<svg class="ic" style="left:231px;top:114px;width:24px;height:24px;" viewBox="0 0 24 24"><path fill="#e6e6e6" d="M19,6.41L17.59,5L12,10.59L6.41,5L5,6.41L10.59,12L5,17.59L6.41,19L12,13.41L17.59,19L19,17.59L13.41,12L19,6.41Z"/></svg>
<div class="abs" style="left:44px;top:137px;width:10px;height:78.5px;border-left:2px solid #c6c6c8;border-bottom:2px solid #c6c6c8;border-bottom-left-radius:5px"></div>
<div class="line" style="left:46px;top:170px;width:8px;height:2px"></div>
<div class="box" style="left:54px;top:155px;width:296px;height:35px"><div class="t" style="left:11px;top:7px;letter-spacing:0.13px">Line item / Product title</div></div><svg class="ic" style="left:314px;top:161.2px;width:24px;height:24px;" viewBox="0 0 24 24"><path fill="#e0e0e0" d="M7,10L12,15L17,10H7Z"/></svg><div class="box" style="left:354px;top:155px;width:156px;height:35px"><div class="t" style="left:11px;top:8px;letter-spacing:-0.04px">equal to</div></div><svg class="ic" style="left:474px;top:161.2px;width:24px;height:24px;" viewBox="0 0 24 24"><path fill="#e0e0e0" d="M7,10L12,15L17,10H7Z"/></svg><div class="box" style="left:514px;top:155px;width:384px;height:35px"><div class="t" style="left:11px;top:7px;letter-spacing:-0.08px">Unicorn Cruiser</div></div><svg class="ic" style="left:834px;top:161px;width:24px;height:24px;" viewBox="0 0 24 24"><path fill="#f2f2f2" d="M19,6.41L17.59,5L12,10.59L6.41,5L5,6.41L10.59,12L5,17.59L6.41,19L12,13.41L17.59,19L19,17.59L13.41,12L19,6.41Z"/></svg><svg class="ic" style="left:862px;top:161px;width:24px;height:24px;" viewBox="0 0 24 24"><path fill="#e6e6e6" d="M18.4,10.6C16.55,9 14.15,8 11.5,8C6.85,8 2.92,11.03 1.54,15.22L3.9,16C4.95,12.81 7.95,10.5 11.5,10.5C13.45,10.5 15.23,11.22 16.62,12.38L13,16H22V7L18.4,10.6Z"/></svg><svg class="ic" style="left:910px;top:162px;width:24px;height:24px;" viewBox="0 0 24 24"><path fill="#d2d2d2" d="M19,6.41L17.59,5L12,10.59L6.41,5L5,6.41L10.59,12L5,17.59L6.41,19L12,13.41L17.59,19L19,17.59L13.41,12L19,6.41Z"/></svg>
<div class="box" style="left:54px;top:197px;width:296px;height:36px"><div class="t" style="left:11px;top:7px;letter-spacing:0.13px">Line item / Product title</div></div><svg class="ic" style="left:314px;top:203.2px;width:24px;height:24px;" viewBox="0 0 24 24"><path fill="#e0e0e0" d="M7,10L12,15L17,10H7Z"/></svg><div class="box" style="left:354px;top:197px;width:156px;height:36px"><div class="t" style="left:11px;top:8px;letter-spacing:-0.04px">equal to</div></div><svg class="ic" style="left:474px;top:203.2px;width:24px;height:24px;" viewBox="0 0 24 24"><path fill="#e0e0e0" d="M7,10L12,15L17,10H7Z"/></svg><div class="box" style="left:514px;top:197px;width:384px;height:36px"><div class="t" style="left:11px;top:7px;letter-spacing:-0.01px">Avocado Ahoy</div></div><svg class="ic" style="left:834px;top:203px;width:24px;height:24px;" viewBox="0 0 24 24"><path fill="#f2f2f2" d="M19,6.41L17.59,5L12,10.59L6.41,5L5,6.41L10.59,12L5,17.59L6.41,19L12,13.41L17.59,19L19,17.59L13.41,12L19,6.41Z"/></svg><svg class="ic" style="left:862px;top:203px;width:24px;height:24px;" viewBox="0 0 24 24"><path fill="#e6e6e6" d="M18.4,10.6C16.55,9 14.15,8 11.5,8C6.85,8 2.92,11.03 1.54,15.22L3.9,16C4.95,12.81 7.95,10.5 11.5,10.5C13.45,10.5 15.23,11.22 16.62,12.38L13,16H22V7L18.4,10.6Z"/></svg><svg class="ic" style="left:910px;top:204px;width:24px;height:24px;" viewBox="0 0 24 24"><path fill="#d2d2d2" d="M19,6.41L17.59,5L12,10.59L6.41,5L5,6.41L10.59,12L5,17.59L6.41,19L12,13.41L17.59,19L19,17.59L13.41,12L19,6.41Z"/></svg>
<div class="abs" style="left:85px;top:103px;width:59px;height:44px;border:3px solid #f04148;box-shadow:1px 2px 4px rgba(0,0,0,.45),inset 1px 2px 4px rgba(0,0,0,.4)"></div>
<div class="abs" style="left:5px;top:190px;width:947px;height:52px;border:3px solid #f8a90f;box-shadow:1px 2px 4px rgba(0,0,0,.45),inset 1px 2px 4px rgba(0,0,0,.3)"></div>
<svg class="ic" style="left:144px;top:39px;width:100px;height:100px;filter:drop-shadow(1.5px 2px 2px rgba(0,0,0,.45))" viewBox="0 0 100 100">
<path d="M73.6,20.3 L50.4,46.4" stroke="#f8a90f" stroke-width="8.4" stroke-linecap="round" fill="none"/>
<path d="M39.4,36.8 L61.3,56 L30.2,69.1Z" fill="#f8a90f"/></svg>
</div>
<div id="tbl">
<div class="abs" style="left:0;top:0;width:1535px;height:37px;border-bottom:1px solid #383d49"></div>
<div class="th" style="left:16px;top:9px;color:#fff"><span style="letter-spacing:-0.17px">Created at</span></div>
<svg class="ic" style="left:76px;top:9.3px;width:18px;height:18px;" viewBox="0 0 24 24"><path fill="#fff" d="M11,4H13V16L18.5,10.5L19.92,11.92L12,19.84L4.08,11.92L5.5,10.5L11,16V4Z"/></svg>
<div class="abs" style="left:94px;top:9px;width:18px;height:18px;border-radius:50%;background:#3a3f4b;color:#fff;font-size:12px;font-weight:bold;text-align:center;line-height:18px">1</div>
<div class="th" style="left:163.5px;top:0"><span style="letter-spacing:-0.37px">Order name</span></div>
<div class="th" style="left:262.5px;top:0"><span style="letter-spacing:-0.13px">Line item /</span><br><span style="letter-spacing:-0.21px">Product title</span></div>
<div class="th" style="left:625px;top:0"><span style="letter-spacing:-0.13px">Line item /</span><br><span style="letter-spacing:-0.20px">Fulfillment status</span></div>
<div class="th r" style="right:1049px;top:0"><span style="letter-spacing:-0.13px">Line item /</span></div><div class="th r" style="right:1070px;top:18px"><span style="letter-spacing:-0.42px">Quantity</span></div>
<div class="th r" style="right:942px;top:0"><span style="letter-spacing:-0.13px">Line item /</span></div><div class="th r" style="right:963px;top:18px"><span style="letter-spacing:-0.41px">Price</span></div>
<div class="th r" style="right:665.5px;top:0"><span style="letter-spacing:-0.13px">Line item /</span></div><div class="th r" style="right:686.5px;top:18px"><span style="letter-spacing:-0.47px">Gross sales</span></div>
<div class="th r" style="right:537px;top:0"><span style="letter-spacing:-0.13px">Line item /</span></div><div class="th r" style="right:558px;top:18px"><span style="letter-spacing:-0.46px">Discounts</span></div>
<div class="th r" style="right:420px;top:0"><span style="letter-spacing:-0.13px">Line item /</span></div><div class="th r" style="right:441px;top:18px"><span style="letter-spacing:-0.44px">Returns</span></div>
<div class="th r" style="right:302px;top:0"><span style="letter-spacing:-0.11px">Line item / Net</span></div><div class="th r" style="right:323px;top:18px"><span style="letter-spacing:-0.26px">sales</span></div>
<div class="th r" style="right:196px;top:0"><span style="letter-spacing:-0.13px">Line item /</span></div><div class="th r" style="right:217px;top:18px"><span style="letter-spacing:-0.29px">Taxes</span></div>
<div class="th r" style="right:74px;top:0"><span style="letter-spacing:-0.14px">Line item / Total</span></div><div class="th r" style="right:95px;top:18px"><span style="letter-spacing:-0.26px">sales</span></div>
<div class="row" style="top:37px">
<div class="t" style="left:16px;top:0;line-height:21px"><span style="letter-spacing:0.58px">1/26/2022,</span><br><span style="letter-spacing:0.22px">2:57:01 AM</span></div>
<div class="t" style="left:164px;top:11px;letter-spacing:.15px">#83882</div>
<div class="t" style="left:262.5px;top:11px">Unicorn Cruiser</div>
<div class="t r" style="right:1048.6px;top:11px;letter-spacing:.3px">2</div>
<div class="t r" style="right:942px;top:11px;letter-spacing:.3px">17.99</div>
<div class="t" style="left:625px;top:11px;letter-spacing:.5px">fulfilled</div>
<div class="t r" style="right:665.5px;top:11px;letter-spacing:.3px">35.98</div>
<div class="t r" style="right:537px;top:11px;letter-spacing:.3px">0.00</div>
<div class="t r" style="right:420px;top:11px;letter-spacing:.3px">0.00</div>
<div class="t r" style="right:302px;top:11px;letter-spacing:.3px">35.98</div>
<div class="t r" style="right:196px;top:11px;letter-spacing:.3px">2.15</div>
<div class="t r" style="right:74px;top:11px;letter-spacing:.3px">38.13</div>
<svg class="ic" style="left:1492.5px;top:9.5px;width:23px;height:23px;" viewBox="0 0 24 24"><path fill="#e6e6e6" d="M12,10L8,14H11V20H13V14H16M19,4H5C3.89,4 3,4.9 3,6V18A2,2 0 0,0 5,20H9V18H5V8H19V18H15V20H19A2,2 0 0,0 21,18V6A2,2 0 0,0 19,4Z"/></svg>
</div>
<div class="row" style="top:80px">
<div class="t" style="left:16px;top:0;line-height:21px"><span style="letter-spacing:0.58px">1/26/2022,</span><br><span style="letter-spacing:0.22px">2:30:01 AM</span></div>
<div class="t" style="left:164px;top:11px;letter-spacing:.15px">#83879</div>
<div class="t" style="left:262.5px;top:11px">Unicorn Cruiser</div>
<div class="t r" style="right:1048.6px;top:11px;letter-spacing:.3px">3</div>
<div class="t r" style="right:942px;top:11px;letter-spacing:.3px">17.99</div>
<div class="t" style="left:625px;top:11px;letter-spacing:.5px">fulfilled</div>
<div class="t r" style="right:665.5px;top:11px;letter-spacing:.3px">53.97</div>
<div class="t r" style="right:537px;top:11px;letter-spacing:.3px">0.00</div>
<div class="t r" style="right:420px;top:11px;letter-spacing:.3px">0.00</div>
<div class="t r" style="right:302px;top:11px;letter-spacing:.3px">53.97</div>
<div class="t r" style="right:196px;top:11px;letter-spacing:.3px">3.24</div>
<div class="t r" style="right:74px;top:11px;letter-spacing:.3px">57.21</div>
<svg class="ic" style="left:1492.5px;top:9.5px;width:23px;height:23px;" viewBox="0 0 24 24"><path fill="#e6e6e6" d="M12,10L8,14H11V20H13V14H16M19,4H5C3.89,4 3,4.9 3,6V18A2,2 0 0,0 5,20H9V18H5V8H19V18H15V20H19A2,2 0 0,0 21,18V6A2,2 0 0,0 19,4Z"/></svg>
</div>
<div class="row" style="top:123px">
<div class="t" style="left:16px;top:0;line-height:21px"><span style="letter-spacing:0.58px">1/26/2022,</span><br><span style="letter-spacing:0.22px">1:42:01 AM</span></div>
<div class="t" style="left:164px;top:11px;letter-spacing:.15px">#83871</div>
<div class="t" style="left:262.5px;top:11px">Unicorn Cruiser</div>
<div class="t r" style="right:1048.6px;top:11px;letter-spacing:.3px">3</div>
<div class="t r" style="right:942px;top:11px;letter-spacing:.3px">17.99</div>
<div class="t" style="left:625px;top:11px;letter-spacing:.5px">fulfilled</div>
<div class="t r" style="right:665.5px;top:11px;letter-spacing:.3px">53.97</div>
<div class="t r" style="right:537px;top:11px;letter-spacing:.3px">0.00</div>
<div class="t r" style="right:420px;top:11px;letter-spacing:.3px">0.00</div>
<div class="t r" style="right:302px;top:11px;letter-spacing:.3px">53.97</div>
<div class="t r" style="right:196px;top:11px;letter-spacing:.3px">3.23</div>
<div class="t r" style="right:74px;top:11px;letter-spacing:.3px">57.20</div>
<svg class="ic" style="left:1492.5px;top:9.5px;width:23px;height:23px;" viewBox="0 0 24 24"><path fill="#e6e6e6" d="M12,10L8,14H11V20H13V14H16M19,4H5C3.89,4 3,4.9 3,6V18A2,2 0 0,0 5,20H9V18H5V8H19V18H15V20H19A2,2 0 0,0 21,18V6A2,2 0 0,0 19,4Z"/></svg>
</div>
<div class="row" style="top:166px">
<div class="t" style="left:16px;top:0;line-height:21px"><span style="letter-spacing:0.58px">1/26/2022,</span><br><span style="letter-spacing:0.22px">1:15:01 AM</span></div>
<div class="t" style="left:164px;top:11px;letter-spacing:.15px">#83867</div>
<div class="t" style="left:262.5px;top:11px">Avocado Ahoy</div>
<div class="t r" style="right:1048.6px;top:11px;letter-spacing:.3px">4</div>
<div class="t r" style="right:942px;top:11px;letter-spacing:.3px">19.99</div>
<div class="t" style="left:625px;top:11px;letter-spacing:.5px">fulfilled</div>
<div class="t r" style="right:665.5px;top:11px;letter-spacing:.3px">79.96</div>
<div class="t r" style="right:537px;top:11px;letter-spacing:.3px">0.00</div>
<div class="t r" style="right:420px;top:11px;letter-spacing:.3px">0.00</div>
<div class="t r" style="right:302px;top:11px;letter-spacing:.3px">79.96</div>
<div class="t r" style="right:196px;top:11px;letter-spacing:.3px">4.80</div>
<div class="t r" style="right:74px;top:11px;letter-spacing:.3px">84.76</div>
<svg class="ic" style="left:1492.5px;top:9.5px;width:23px;height:23px;" viewBox="0 0 24 24"><path fill="#e6e6e6" d="M12,10L8,14H11V20H13V14H16M19,4H5C3.89,4 3,4.9 3,6V18A2,2 0 0,0 5,20H9V18H5V8H19V18H15V20H19A2,2 0 0,0 21,18V6A2,2 0 0,0 19,4Z"/></svg>
</div>
<div class="row" style="top:209px">
<div class="t" style="left:16px;top:0;line-height:21px"><span style="letter-spacing:0.58px">1/26/2022,</span><br><span style="letter-spacing:0.22px">1:12:01 AM</span></div>
<div class="t" style="left:164px;top:11px;letter-spacing:.15px">#83866</div>
<div class="t" style="left:262.5px;top:11px">Avocado Ahoy</div>
<div class="t r" style="right:1048.6px;top:11px;letter-spacing:.3px">2</div>
<div class="t r" style="right:942px;top:11px;letter-spacing:.3px">19.99</div>
<div class="t" style="left:625px;top:11px;letter-spacing:.5px">fulfilled</div>
<div class="t r" style="right:665.5px;top:11px;letter-spacing:.3px">39.98</div>
<div class="t r" style="right:537px;top:11px;letter-spacing:.3px">0.00</div>
<div class="t r" style="right:420px;top:11px;letter-spacing:.3px">0.00</div>
<div class="t r" style="right:302px;top:11px;letter-spacing:.3px">39.98</div>
<div class="t r" style="right:196px;top:11px;letter-spacing:.3px">2.40</div>
<div class="t r" style="right:74px;top:11px;letter-spacing:.3px">42.38</div>
<svg class="ic" style="left:1492.5px;top:9.5px;width:23px;height:23px;" viewBox="0 0 24 24"><path fill="#e6e6e6" d="M12,10L8,14H11V20H13V14H16M19,4H5C3.89,4 3,4.9 3,6V18A2,2 0 0,0 5,20H9V18H5V8H19V18H15V20H19A2,2 0 0,0 21,18V6A2,2 0 0,0 19,4Z"/></svg>
</div>
<div class="row" style="top:252px">
<div class="t" style="left:16px;top:0;line-height:21px"><span style="letter-spacing:0.58px">1/26/2022,</span><br><span style="letter-spacing:0.21px">12:30:01 AM</span></div>
<div class="t" style="left:164px;top:11px;letter-spacing:.15px">#83854</div>
<div class="t" style="left:262.5px;top:11px">Avocado Ahoy</div>
<div class="t r" style="right:1048.6px;top:11px;letter-spacing:.3px">2</div>
<div class="t r" style="right:942px;top:11px;letter-spacing:.3px">19.99</div>
<div class="t" style="left:625px;top:11px;letter-spacing:.5px">fulfilled</div>
<div class="t r" style="right:665.5px;top:11px;letter-spacing:.3px">39.98</div>
<div class="t r" style="right:537px;top:11px;letter-spacing:.3px">0.00</div>
<div class="t r" style="right:420px;top:11px;letter-spacing:.3px">0.00</div>
<div class="t r" style="right:302px;top:11px;letter-spacing:.3px">39.98</div>
<div class="t r" style="right:196px;top:11px;letter-spacing:.3px">2.40</div>
<div class="t r" style="right:74px;top:11px;letter-spacing:.3px">42.38</div>
<svg class="ic" style="left:1492.5px;top:9.5px;width:23px;height:23px;" viewBox="0 0 24 24"><path fill="#e6e6e6" d="M12,10L8,14H11V20H13V14H16M19,4H5C3.89,4 3,4.9 3,6V18A2,2 0 0,0 5,20H9V18H5V8H19V18H15V20H19A2,2 0 0,0 21,18V6A2,2 0 0,0 19,4Z"/></svg>
</div>
<div class="row" style="top:295px">
<div class="t" style="left:16px;top:0;line-height:21px"><span style="letter-spacing:0.58px">1/26/2022,</span><br><span style="letter-spacing:0.21px">12:15:01 AM</span></div>
<div class="t" style="left:164px;top:11px;letter-spacing:.15px">#83851</div>
<div class="t" style="left:262.5px;top:11px">Unicorn Cruiser</div>
<div class="t r" style="right:1048.6px;top:11px;letter-spacing:.3px">2</div>
<div class="t r" style="right:942px;top:11px;letter-spacing:.3px">17.99</div>
<div class="t" style="left:625px;top:11px;letter-spacing:.5px">fulfilled</div>
<div class="t r" style="right:665.5px;top:11px;letter-spacing:.3px">35.98</div>
<div class="t r" style="right:537px;top:11px;letter-spacing:.3px">0.00</div>
<div class="t r" style="right:420px;top:11px;letter-spacing:.3px">0.00</div>
<div class="t r" style="right:302px;top:11px;letter-spacing:.3px">35.98</div>
<div class="t r" style="right:196px;top:11px;letter-spacing:.3px">2.16</div>
<div class="t r" style="right:74px;top:11px;letter-spacing:.3px">38.14</div>
<svg class="ic" style="left:1492.5px;top:9.5px;width:23px;height:23px;" viewBox="0 0 24 24"><path fill="#e6e6e6" d="M12,10L8,14H11V20H13V14H16M19,4H5C3.89,4 3,4.9 3,6V18A2,2 0 0,0 5,20H9V18H5V8H19V18H15V20H19A2,2 0 0,0 21,18V6A2,2 0 0,0 19,4Z"/></svg>
</div>
<div class="row" style="top:338px">
<div class="t" style="left:16px;top:0;line-height:21px"><span style="letter-spacing:0.58px">1/26/2022,</span><br><span style="letter-spacing:0.21px">12:09:01 AM</span></div>
<div class="t" style="left:164px;top:11px;letter-spacing:.15px">#83849</div>
<div class="t" style="left:262.5px;top:11px">Avocado Ahoy</div>
<div class="t r" style="right:1048.6px;top:11px;letter-spacing:.3px">2</div>
<div class="t r" style="right:942px;top:11px;letter-spacing:.3px">19.99</div>
<div class="t" style="left:625px;top:11px;letter-spacing:.5px">fulfilled</div>
<div class="t r" style="right:665.5px;top:11px;letter-spacing:.3px">39.98</div>
<div class="t r" style="right:537px;top:11px;letter-spacing:.3px">0.00</div>
<div class="t r" style="right:420px;top:11px;letter-spacing:.3px">0.00</div>
<div class="t r" style="right:302px;top:11px;letter-spacing:.3px">39.98</div>
<div class="t r" style="right:196px;top:11px;letter-spacing:.3px">2.41</div>
<div class="t r" style="right:74px;top:11px;letter-spacing:.3px">42.39</div>
<svg class="ic" style="left:1492.5px;top:9.5px;width:23px;height:23px;" viewBox="0 0 24 24"><path fill="#e6e6e6" d="M12,10L8,14H11V20H13V14H16M19,4H5C3.89,4 3,4.9 3,6V18A2,2 0 0,0 5,20H9V18H5V8H19V18H15V20H19A2,2 0 0,0 21,18V6A2,2 0 0,0 19,4Z"/></svg>
</div>
<div class="row" style="top:381px">
<div class="t" style="left:16px;top:0;line-height:21px"><span style="letter-spacing:0.58px">1/25/2022,</span><br><span style="letter-spacing:0.23px">11:45:01 PM</span></div>
<div class="t" style="left:164px;top:11px;letter-spacing:.15px">#83844</div>
<div class="t" style="left:262.5px;top:11px">Avocado Ahoy</div>
<div class="t r" style="right:1048.6px;top:11px;letter-spacing:.3px">4</div>
<div class="t r" style="right:942px;top:11px;letter-spacing:.3px">19.99</div>
<div class="t" style="left:625px;top:11px;letter-spacing:.5px">fulfilled</div>
<div class="t r" style="right:665.5px;top:11px;letter-spacing:.3px">79.96</div>
<div class="t r" style="right:537px;top:11px;letter-spacing:.3px">0.00</div>
<div class="t r" style="right:420px;top:11px;letter-spacing:.3px">0.00</div>
<div class="t r" style="right:302px;top:11px;letter-spacing:.3px">79.96</div>
<div class="t r" style="right:196px;top:11px;letter-spacing:.3px">4.80</div>
<div class="t r" style="right:74px;top:11px;letter-spacing:.3px">84.76</div>
<svg class="ic" style="left:1492.5px;top:9.5px;width:23px;height:23px;" viewBox="0 0 24 24"><path fill="#e6e6e6" d="M12,10L8,14H11V20H13V14H16M19,4H5C3.89,4 3,4.9 3,6V18A2,2 0 0,0 5,20H9V18H5V8H19V18H15V20H19A2,2 0 0,0 21,18V6A2,2 0 0,0 19,4Z"/></svg>
</div>
<div class="row" style="top:424px">
<div class="t" style="left:16px;top:0;line-height:21px"><span style="letter-spacing:0.58px">1/25/2022,</span><br><span style="letter-spacing:0.23px">11:36:01 PM</span></div>
<div class="t" style="left:164px;top:11px;letter-spacing:.15px">#83843</div>
<div class="t" style="left:262.5px;top:11px">Unicorn Cruiser</div>
<div class="t r" style="right:1048.6px;top:11px;letter-spacing:.3px">3</div>
<div class="t r" style="right:942px;top:11px;letter-spacing:.3px">17.99</div>
<div class="t" style="left:625px;top:11px;letter-spacing:.5px">fulfilled</div>
<div class="t r" style="right:665.5px;top:11px;letter-spacing:.3px">53.97</div>
<div class="t r" style="right:537px;top:11px;letter-spacing:.3px">0.00</div>
<div class="t r" style="right:420px;top:11px;letter-spacing:.3px">0.00</div>
<div class="t r" style="right:302px;top:11px;letter-spacing:.3px">53.97</div>
<div class="t r" style="right:196px;top:11px;letter-spacing:.3px">3.23</div>
<div class="t r" style="right:74px;top:11px;letter-spacing:.3px">57.20</div>
<svg class="ic" style="left:1492.5px;top:9.5px;width:23px;height:23px;" viewBox="0 0 24 24"><path fill="#e6e6e6" d="M12,10L8,14H11V20H13V14H16M19,4H5C3.89,4 3,4.9 3,6V18A2,2 0 0,0 5,20H9V18H5V8H19V18H15V20H19A2,2 0 0,0 21,18V6A2,2 0 0,0 19,4Z"/></svg>
</div>
<div class="row" style="top:467px">
<div class="t" style="left:16px;top:0;line-height:21px"><span style="letter-spacing:0.58px">1/25/2022,</span><br><span style="letter-spacing:0.23px">11:03:01 PM</span></div>
<div class="t" style="left:164px;top:11px;letter-spacing:.15px">#83835</div>
<div class="t" style="left:262.5px;top:11px">Avocado Ahoy</div>
<div class="t r" style="right:1048.6px;top:11px;letter-spacing:.3px">4</div>
<div class="t r" style="right:942px;top:11px;letter-spacing:.3px">19.99</div>
<div class="t" style="left:625px;top:11px;letter-spacing:.5px">fulfilled</div>
<div class="t r" style="right:665.5px;top:11px;letter-spacing:.3px">79.96</div>
<div class="t r" style="right:537px;top:11px;letter-spacing:.3px">0.00</div>
<div class="t r" style="right:420px;top:11px;letter-spacing:.3px">0.00</div>
<div class="t r" style="right:302px;top:11px;letter-spacing:.3px">79.96</div>
<div class="t r" style="right:196px;top:11px;letter-spacing:.3px">4.80</div>
<div class="t r" style="right:74px;top:11px;letter-spacing:.3px">84.76</div>
<svg class="ic" style="left:1492.5px;top:9.5px;width:23px;height:23px;" viewBox="0 0 24 24"><path fill="#e6e6e6" d="M12,10L8,14H11V20H13V14H16M19,4H5C3.89,4 3,4.9 3,6V18A2,2 0 0,0 5,20H9V18H5V8H19V18H15V20H19A2,2 0 0,0 21,18V6A2,2 0 0,0 19,4Z"/></svg>
</div>
<div class="row" style="top:510px">
<div class="t" style="left:16px;top:0;line-height:21px"><span style="letter-spacing:0.58px">1/25/2022,</span><br><span style="letter-spacing:0.13px">10:42:01 PM</span></div>
<div class="t" style="left:164px;top:11px;letter-spacing:.15px">#83829</div>
<div class="t" style="left:262.5px;top:11px">Unicorn Cruiser</div>
<div class="t r" style="right:1048.6px;top:11px;letter-spacing:.3px">3</div>
<div class="t r" style="right:942px;top:11px;letter-spacing:.3px">17.99</div>
<div class="t" style="left:625px;top:11px;letter-spacing:.5px">fulfilled</div>
<div class="t r" style="right:665.5px;top:11px;letter-spacing:.3px">53.97</div>
<div class="t r" style="right:537px;top:11px;letter-spacing:.3px">0.00</div>
<div class="t r" style="right:420px;top:11px;letter-spacing:.3px">0.00</div>
<div class="t r" style="right:302px;top:11px;letter-spacing:.3px">53.97</div>
<div class="t r" style="right:196px;top:11px;letter-spacing:.3px">3.24</div>
<div class="t r" style="right:74px;top:11px;letter-spacing:.3px">57.21</div>
<svg class="ic" style="left:1492.5px;top:9.5px;width:23px;height:23px;" viewBox="0 0 24 24"><path fill="#e6e6e6" d="M12,10L8,14H11V20H13V14H16M19,4H5C3.89,4 3,4.9 3,6V18A2,2 0 0,0 5,20H9V18H5V8H19V18H15V20H19A2,2 0 0,0 21,18V6A2,2 0 0,0 19,4Z"/></svg>
</div>
</div>
<div class="abs" style="left:1721px;top:868px;width:60px;height:60px;border-radius:50%;background:#f5b136;z-index:7">
<svg class="ic" style="left:0;top:0;width:60px;height:60px" viewBox="0 0 60 60">
<path d="M16.4,18.2 H34 Q35.6,18.2 35.6,19.8 V33.6 Q35.6,35.2 34,35.2 H19.4 L14.8,39 V19.8 Q14.8,18.2 16.4,18.2Z" fill="#fff"/>
<path d="M26.4,24.2 H44.2 Q46.6,24.2 46.6,26.6 V46.8 L41.2,42.8 H26.4 Q24,42.8 24,40.4 V26.6 Q24,24.2 26.4,24.2Z" fill="#f5b136"/>
<path d="M26.6,25.2 H44 Q45.6,25.2 45.6,26.8 V45 L41.4,41.8 H26.6 Q25,41.8 25,40.2 V26.8 Q25,25.2 26.6,25.2Z" fill="#fff"/>
<g fill="#f5b136"><rect x="30.3" y="33" width="1.7" height="1.7"/><rect x="34.4" y="33" width="1.7" height="1.7"/><rect x="38.6" y="33" width="1.7" height="1.7"/></g>
</svg></div>
</body></html>
